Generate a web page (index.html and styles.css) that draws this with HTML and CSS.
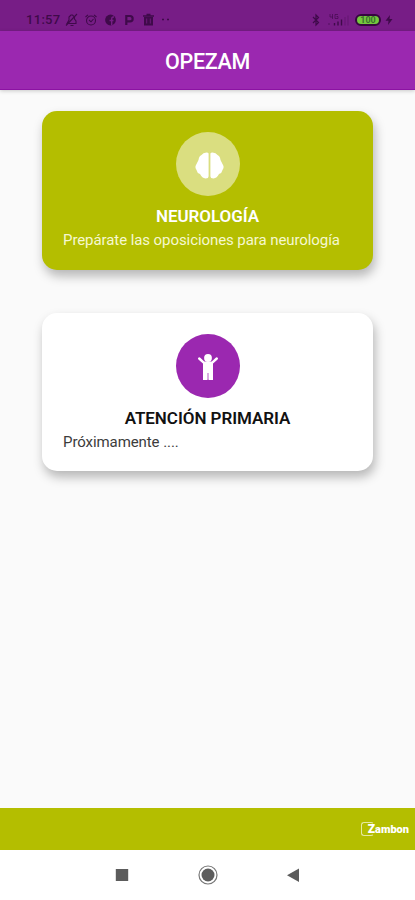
FILE: index.html
```html
<!DOCTYPE html>
<html lang="es">
<head>
<meta charset="utf-8">
<title>OPEZAM</title>
<link rel="stylesheet" href="styles.css">
</head>
<body>
<div class="status">
  <span class="clock">11:57</span>
  <svg class="notices" width="108" height="14" viewBox="0 0 108 14" fill="none" stroke="currentColor" stroke-width="1.100">
    <path d="M2 10.500h9V8L9.500 6V4L7.500 2H6L4 4v3zM5.500 12.500h3M1 12.500 12 1"/>
    <circle cx="26" cy="7.500" r="4.500"/><path d="M20.500 4 23 1.800M31.500 4 29 1.800M24 7l2 1.800L28.500 6"/>
    <circle cx="45.500" cy="7" r="5.400" fill="currentColor" stroke="none"/><path d="M49 4h-.7Q46.700 4 46.700 6v6.300M44.500 7.500h4" stroke="#771d86" stroke-width="1.400"/>
    <path d="M61.300 12V3H65a2.500 2.500 0 0 1 0 5.300h-3.500" stroke-width="2.200"/>
    <path d="M78 3h11M81.500 1.500h4" stroke-width="1.500"/><path d="M79 4h9v8.500h-9z" fill="currentColor" stroke="none"/><path d="M81.700 5.500v5M85.300 5.500v5" stroke="#771d86" stroke-width=".8"/>
    <path d="M97 6.500h2M102 6.500h2" stroke-width="1.600"/>
  </svg>
  <svg class="radio" width="42" height="14" viewBox="0 0 42 14" fill="none" stroke="currentColor">
    <path d="m4 4 5.500 5.500L7 12V2l2.500 2.500L4 10" stroke-width="1.200"/>
    <path d="M21 1v3h3M23.500 1v5M29 1.500h-3v4h3v-2h-1.500M20 10v2" stroke-width=".9" opacity=".7"/><path d="M25.500 10v2.500M29 8.500v4M32.500 6.500v6" stroke-width="1.400"/>
    <path d="M36 4v8.500M39 2.500v10" opacity=".25" stroke-width="1.400"/>
  </svg>
  <span class="battery">100</span>
  <svg class="bolt" width="8" height="12" viewBox="0 0 8 12" fill="currentColor"><path d="M5 1 .5 6.700h3L3 11l4.500-6h-3z"/></svg>
</div>
<header class="appbar"><h1>OPEZAM</h1></header>
<main class="content">
  <section class="card green">
    <div class="badge">
      <svg width="29" height="27" viewBox="0 0 29 27" fill="#fff"><path d="M13.600 1.500Q13.300.5 11.500.5 8 .5 6.500 3 4 4 3.500 8L.5 14Q0 16 1.500 18 2 21 5 22 7 26 10.500 26.500 13.600 26.500 13.600 24zM15.400 1.500Q15.700.5 17.500.5 21 .5 22.500 3 25 4 25.500 8l3 6q.5 2-1 4-.5 3-3.500 4-2 4-5.500 4.500-3.100 0-3.100-2.500z"/></svg>
    </div>
    <h2>NEUROLOGÍA</h2>
    <p>Prepárate las oposiciones para neurología</p>
  </section>
  <section class="card white">
    <div class="badge">
      <svg width="22" height="28" viewBox="0 0 22 28" fill="none" stroke="#fff" stroke-linecap="round" stroke-linejoin="round"><circle cx="11" cy="5" r="3.900" fill="#fff" stroke="none"/><path d="M2.200 5.500 7 9.800h8l4.800-4.300" stroke-width="2.400"/><path d="M6 9.500h10V27h-4.400v-7h-1.200v7H6z" fill="#fff" stroke="none"/><path d="M10.400 20h1.200v6.500h-1.200z" fill="#fff" stroke="none" opacity=".6"/></svg>
    </div>
    <h2>ATENCIÓN PRIMARIA</h2>
    <p>Próximamente ....</p>
  </section>
</main>
<footer class="brand"><span class="mark"></span><span class="name"><b>Z</b>ambon</span></footer>
<nav class="system">
  <svg width="14" height="14" viewBox="0 0 14 14"><path d="M.8 1h12.400v12H.8z" fill="#5c5c5c"/></svg>
  <svg width="20" height="20" viewBox="0 0 20 20"><circle cx="10" cy="10" r="9" fill="none" stroke="#777" stroke-width="1.200"/><circle cx="10" cy="10" r="6.500" fill="#5c5c5c"/></svg>
  <svg width="14" height="14" viewBox="0 0 14 14"><path d="M12 .5v13.500L0 7.200z" fill="#5c5c5c"/></svg>
</nav>
</body>
</html>
```

FILE: styles.css
```css
* { box-sizing: border-box; }
body {
  margin: 0;
  height: 900px;
  display: flex;
  flex-direction: column;
  overflow: hidden;
  background: #fafafa;
  font-family: Roboto, "Liberation Sans", sans-serif;
}
h1, h2, p { margin: 0; }
.status {
  height: 31px;
  padding: 8px 22px 0 26px;
  display: flex;
  align-items: center;
  background: #771d86;
  color: #3f0a4a;
}
.clock { width: 39px; font-size: 13px; font-weight: 500; letter-spacing: .3px; }
.radio { margin-left: auto; }
.battery {
  width: 26px;
  height: 12px;
  margin: 0 4px 0 4px;
  border: 2px solid #36073f;
  border-radius: 6px;
  background: #75c83e;
  color: #3d7030;
  font-size: 9px;
  font-weight: 700;
  line-height: 8px;
  text-align: center;
}
.appbar {
  height: 59px;
  flex: none;
  display: flex;
  align-items: center;
  justify-content: center;
  background: #9b28b0;
  border-bottom: 1px solid #8c12a3;
  box-shadow: 0 1px 4px rgba(0, 0, 0, .2);
  color: #fff;
}
h1 { font-size: 21.500px; font-weight: 500; line-height: 26px; padding-top: 4px; letter-spacing: -.3px; }
.content {
  flex: 1;
  display: flex;
  flex-direction: column;
  gap: 43px;
  padding: 21px 42px 0;
}
.card {
  height: 158.500px;
  padding: 21px 21px 0;
  display: flex;
  flex-direction: column;
  border-radius: 15px;
  box-shadow: 2px 6px 11px rgba(0, 0, 0, .28);
}
.green { background: #b4be00; color: #fff; }
.white { background: #fff; color: #111; }
.badge {
  width: 64px;
  height: 64px;
  align-self: center;
  display: flex;
  align-items: center;
  justify-content: center;
  border-radius: 50%;
}
.green .badge { background: #dade80; padding: 3px 0 0 4px; }
.white .badge { background: #9b28b0; padding-top: 3px; }
h2 { margin-top: 9px; font-size: 17px; font-weight: 600; line-height: 22px; text-align: center; letter-spacing: -.05px; }
p { margin-top: 3px; font-size: 15px; line-height: 20px; white-space: nowrap; letter-spacing: -.08px; }
.green p { color: #f6f8d0; }
.white p { color: #3c3c3c; }
.brand {
  height: 42px;
  padding-right: 6px;
  display: flex;
  align-items: center;
  justify-content: flex-end;
  background: #b4be00;
  color: #fff;
}
.mark {
  width: 13px;
  height: 14px;
  margin-right: -6px;
  border: 1px solid #e5e9a0;
  border-right-color: transparent;
  border-radius: 3px;
}
.name { font-size: 11px; font-weight: 900; line-height: 14px; }
.name b { font-size: 12px; }
.system {
  height: 50px;
  display: flex;
  align-items: center;
  justify-content: center;
  gap: 69px;
  background: #fff;
}
```
